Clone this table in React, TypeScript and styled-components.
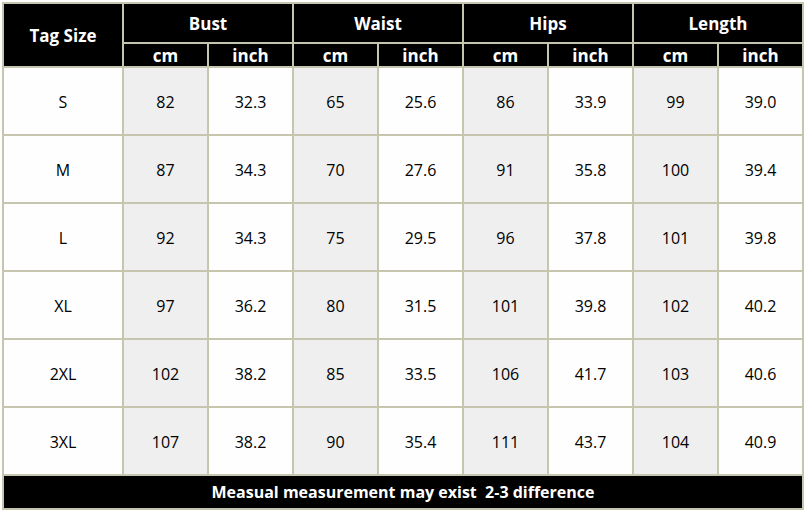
import React from "react";
import styled, { createGlobalStyle } from "styled-components";

const Global = createGlobalStyle`
  html, body { margin: 0; padding: 0; background: #ffffff; }
  body { font-family: "Open Sans", "DejaVu Sans", sans-serif; }
`;

const Table = styled.div`
  margin: 2px;
  padding: 2px;
  width: fit-content;
  display: grid;
  grid-template-columns: 118px repeat(8, 83px);
  grid-template-rows: 38px 22px repeat(6, 66px) 32px;
  gap: 2px;
  background: #c6c6ae;
`;

const HeadCell = styled.div<{ $span?: number; $rows?: number }>`
  background: #000000;
  color: #ffffff;
  font-weight: 700;
  font-size: 17px;
  display: flex;
  align-items: center;
  justify-content: center;
  grid-column: span ${(p) => p.$span ?? 1};
  grid-row: span ${(p) => p.$rows ?? 1};
`;

const Cell = styled.div<{ $tone: "white" | "gray" }>`
  background: ${(p) => (p.$tone === "gray" ? "#efeff0" : "#fefefe")};
  color: #000000;
  font-size: 16px;
  display: flex;
  align-items: center;
  justify-content: center;
  padding-top: 1px;
`;

const Footer = styled.div`
  grid-column: 1 / -1;
  background: #000000;
  color: #ffffff;
  font-weight: 700;
  font-size: 16px;
  display: flex;
  align-items: center;
  justify-content: center;
  white-space: pre;
`;

const groups = ["Bust", "Waist", "Hips", "Length"];

const rows: [string, ...string[]][] = [
  ["S", "82", "32.3", "65", "25.6", "86", "33.9", "99", "39.0"],
  ["M", "87", "34.3", "70", "27.6", "91", "35.8", "100", "39.4"],
  ["L", "92", "34.3", "75", "29.5", "96", "37.8", "101", "39.8"],
  ["XL", "97", "36.2", "80", "31.5", "101", "39.8", "102", "40.2"],
  ["2XL", "102", "38.2", "85", "33.5", "106", "41.7", "103", "40.6"],
  ["3XL", "107", "38.2", "90", "35.4", "111", "43.7", "104", "40.9"],
];

export default function App() {
  return (
    <>
      <Global />
      <Table>
        <HeadCell $rows={2}>Tag Size</HeadCell>
        {groups.map((g) => (
          <HeadCell key={g} $span={2}>
            {g}
          </HeadCell>
        ))}
        {groups.map((g) => (
          <React.Fragment key={g + "u"}>
            <HeadCell>cm</HeadCell>
            <HeadCell>inch</HeadCell>
          </React.Fragment>
        ))}
        {rows.map((r) =>
          r.map((v, i) => (
            <Cell key={r[0] + i} $tone={i > 0 && i % 2 === 1 ? "gray" : "white"}>
              {v}
            </Cell>
          ))
        )}
        <Footer>{"Measual measurement may exist  2-3 difference"}</Footer>
      </Table>
    </>
  );
}
